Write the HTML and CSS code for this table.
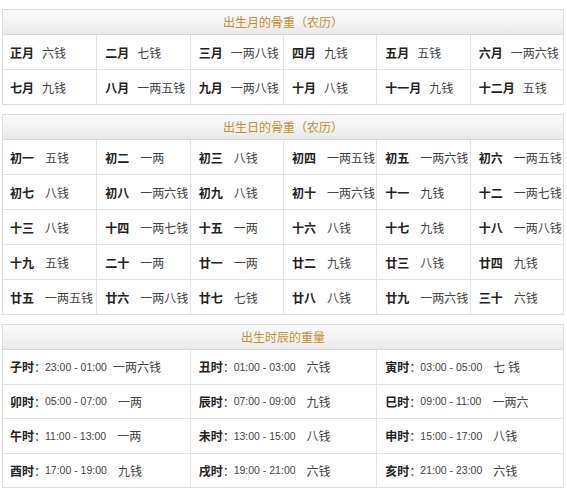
FILE: index.html
```html
<!DOCTYPE html>
<html lang="zh">
<head>
<meta charset="utf-8">
<title>骨重</title>
<link rel="stylesheet" href="styles.css">
</head>
<body>
<div class="page">
  <section class="panel">
    <div class="panel-head">出生月的骨重（农历）</div>
    <div class="grid grid-6">
      <div class="cell"><b>正月</b><span class="v">六钱</span></div>
      <div class="cell"><b>二月</b><span class="v">七钱</span></div>
      <div class="cell"><b>三月</b><span class="v">一两八钱</span></div>
      <div class="cell"><b>四月</b><span class="v">九钱</span></div>
      <div class="cell"><b>五月</b><span class="v">五钱</span></div>
      <div class="cell"><b>六月</b><span class="v">一两六钱</span></div>
      <div class="cell"><b>七月</b><span class="v">九钱</span></div>
      <div class="cell"><b>八月</b><span class="v">一两五钱</span></div>
      <div class="cell"><b>九月</b><span class="v">一两八钱</span></div>
      <div class="cell"><b>十月</b><span class="v">八钱</span></div>
      <div class="cell"><b>十一月</b><span class="v">九钱</span></div>
      <div class="cell"><b>十二月</b><span class="v">五钱</span></div>
    </div>
  </section>

  <section class="panel">
    <div class="panel-head">出生日的骨重（农历）</div>
    <div class="grid grid-6 days">
      <div class="cell"><b>初一</b><span class="v">五钱</span></div>
      <div class="cell"><b>初二</b><span class="v">一两</span></div>
      <div class="cell"><b>初三</b><span class="v">八钱</span></div>
      <div class="cell"><b>初四</b><span class="v">一两五钱</span></div>
      <div class="cell"><b>初五</b><span class="v">一两六钱</span></div>
      <div class="cell"><b>初六</b><span class="v">一两五钱</span></div>
      <div class="cell"><b>初七</b><span class="v">八钱</span></div>
      <div class="cell"><b>初八</b><span class="v">一两六钱</span></div>
      <div class="cell"><b>初九</b><span class="v">八钱</span></div>
      <div class="cell"><b>初十</b><span class="v">一两六钱</span></div>
      <div class="cell"><b>十一</b><span class="v">九钱</span></div>
      <div class="cell"><b>十二</b><span class="v">一两七钱</span></div>
      <div class="cell"><b>十三</b><span class="v">八钱</span></div>
      <div class="cell"><b>十四</b><span class="v">一两七钱</span></div>
      <div class="cell"><b>十五</b><span class="v">一两</span></div>
      <div class="cell"><b>十六</b><span class="v">八钱</span></div>
      <div class="cell"><b>十七</b><span class="v">九钱</span></div>
      <div class="cell"><b>十八</b><span class="v">一两八钱</span></div>
      <div class="cell"><b>十九</b><span class="v">五钱</span></div>
      <div class="cell"><b>二十</b><span class="v">一两</span></div>
      <div class="cell"><b>廿一</b><span class="v">一两</span></div>
      <div class="cell"><b>廿二</b><span class="v">九钱</span></div>
      <div class="cell"><b>廿三</b><span class="v">八钱</span></div>
      <div class="cell"><b>廿四</b><span class="v">九钱</span></div>
      <div class="cell"><b>廿五</b><span class="v">一两五钱</span></div>
      <div class="cell"><b>廿六</b><span class="v">一两八钱</span></div>
      <div class="cell"><b>廿七</b><span class="v">七钱</span></div>
      <div class="cell"><b>廿八</b><span class="v">八钱</span></div>
      <div class="cell"><b>廿九</b><span class="v">一两六钱</span></div>
      <div class="cell"><b>三十</b><span class="v">六钱</span></div>
    </div>
  </section>

  <section class="panel">
    <div class="panel-head">出生时辰的重量</div>
    <div class="grid grid-3 hours">
      <div class="cell"><b>子时</b><span class="c">：</span><span class="t">23:00 - 01:00</span><span class="v tight">一两六钱</span></div>
      <div class="cell"><b>丑时</b><span class="c">：</span><span class="t">01:00 - 03:00</span><span class="v">六钱</span></div>
      <div class="cell"><b>寅时</b><span class="c">：</span><span class="t">03:00 - 05:00</span><span class="v">七 钱</span></div>
      <div class="cell"><b>卯时</b><span class="c">：</span><span class="t">05:00 - 07:00</span><span class="v">一两</span></div>
      <div class="cell"><b>辰时</b><span class="c">：</span><span class="t">07:00 - 09:00</span><span class="v">九钱</span></div>
      <div class="cell"><b>巳时</b><span class="c">：</span><span class="t">09:00 - 11:00</span><span class="v">一两六</span></div>
      <div class="cell"><b>午时</b><span class="c">：</span><span class="t">11:00 - 13:00</span><span class="v">一两</span></div>
      <div class="cell"><b>未时</b><span class="c">：</span><span class="t">13:00 - 15:00</span><span class="v">八钱</span></div>
      <div class="cell"><b>申时</b><span class="c">：</span><span class="t">15:00 - 17:00</span><span class="v">八钱</span></div>
      <div class="cell"><b>酉时</b><span class="c">：</span><span class="t">17:00 - 19:00</span><span class="v">九钱</span></div>
      <div class="cell"><b>戌时</b><span class="c">：</span><span class="t">19:00 - 21:00</span><span class="v">六钱</span></div>
      <div class="cell"><b>亥时</b><span class="c">：</span><span class="t">21:00 - 23:00</span><span class="v">六钱</span></div>
    </div>
  </section>
</div>
</body>
</html>
```

FILE: styles.css
```css
* { box-sizing: border-box; }

html, body {
  margin: 0;
  padding: 0;
  background: #ffffff;
}

body {
  font-family: "Liberation Sans", "Noto Sans CJK SC", sans-serif;
  font-size: 12px;
  color: #333333;
}

.page {
  width: 562px;
  margin-left: 2px;
  padding-top: 9px;
  display: flex;
  flex-direction: column;
  gap: 9px;
}

.panel {
  border: 1px solid #dddddd;
  background: #ffffff;
}

.panel-head {
  height: 25px;
  border-bottom: 1px solid #d9d9d9;
  background: linear-gradient(to bottom, #fbfbfb 0%, #f3f3f3 50%, #e9e9e9 100%);
  color: #c2922e;
  text-align: center;
  line-height: 24px;
  font-family: "Noto Sans CJK SC", sans-serif;
  font-size: 12px;
}

.grid {
  display: grid;
}

.grid-6 { grid-template-columns: repeat(6, 1fr); }
.grid-3 { grid-template-columns: repeat(3, 1fr); }

.cell {
  height: 35px;
  display: flex;
  align-items: center;
  padding-left: 8px;
  border-left: 1px solid #e3e3e3;
  border-top: 1px solid #e3e3e3;
  white-space: nowrap;
  overflow: hidden;
}

.grid-6 .cell:nth-child(6n+1),
.grid-3 .cell:nth-child(3n+1) {
  border-left: none;
  padding-left: 7px;
}

.grid .cell:nth-child(-n+6) { border-top: none; height: 34px; }
.grid-3 .cell:nth-child(-n+3) { border-top: none; height: 33.5px; }
.grid-3 .cell { height: 34.5px; }
.grid-3 .cell:nth-child(n+4) { height: 34.5px; border-top: 1px solid #e3e3e3; }

.cell b {
  font-family: "Noto Sans CJK SC", sans-serif;
  font-weight: 700;
  color: #222222;
}

.cell .v {
  font-family: "Noto Sans CJK SC", sans-serif;
  color: #444444;
  margin-left: 8px;
}

.days .cell .v { margin-left: 11px; }

.hours .cell .c {
  font-family: "Noto Sans CJK SC", sans-serif;
  color: #333333;
  width: 11px;
}

.hours .cell .t {
  font-size: 10.5px;
  color: #444444;
}

.hours .cell .v { margin-left: 11px; }
.hours .cell .v.tight { margin-left: 6px; }
```
